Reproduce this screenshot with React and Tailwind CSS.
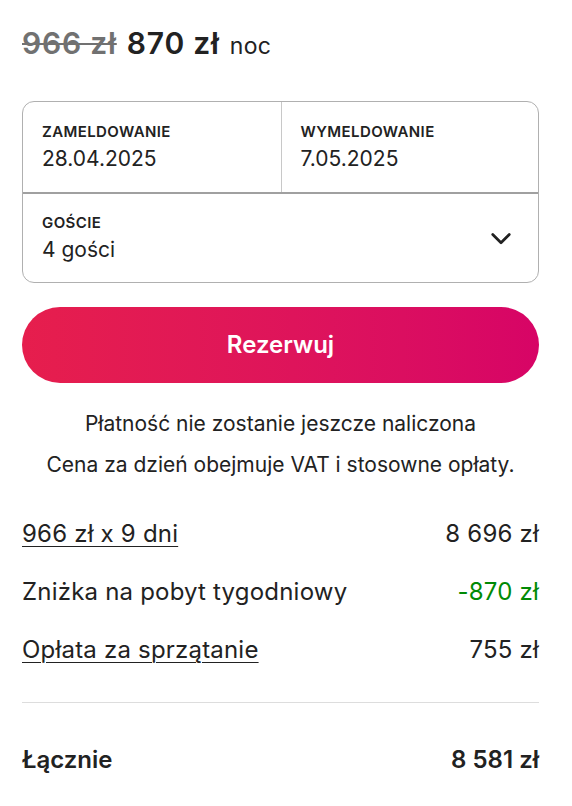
import React from 'react';

const rows = [
  { label: '966 zł x 9 dni', value: '8 696 zł', underline: true },
  { label: 'Zniżka na pobyt tygodniowy', value: '-870 zł', green: true },
  { label: 'Opłata za sprzątanie', value: '755 zł', underline: true },
];

const Field = ({ label, value, className = '' }) => (
  <div className={`flex flex-col px-[19px] ${className}`}>
    <span className="text-[15px] font-semibold uppercase leading-[18px] tracking-[0.4px] text-[#222]">{label}</span>
    <span className="mt-[5px] text-[21px] leading-[26px] text-[#222]">{value}</span>
  </div>
);

const App = () => {
  return (
    <div className="min-h-[806px] bg-white pt-[21px] text-[#222]" style={{ fontFamily: 'Inter, "Noto Sans", sans-serif' }}>
      <div className="ml-[22px] w-[517px]">
        {/* price per night */}
        <div className="flex items-baseline gap-[10px]">
          <span className="text-[30px] font-semibold tracking-[0.8px] text-[#717171] line-through decoration-[2px]">966 zł</span>
          <span className="text-[30px] font-semibold tracking-[0.8px]">870 zł</span>
          <span className="text-[23px] tracking-[0.3px]">noc</span>
        </div>

        {/* dates + guests */}
        <div className="mt-[35px] overflow-hidden rounded-[12px] border border-[#b0b0b0]">
          <div className="grid h-[92px] grid-cols-2 border-b-2 border-[#a0a0a0]">
            <Field label="Zameldowanie" value="28.04.2025" className="pt-[21px]" />
            <Field label="Wymeldowanie" value="7.05.2025" className="border-l border-[#c8c8c8] pt-[21px]" />
          </div>
          <div className="flex h-[88px] items-center justify-between pr-[26px]">
            <Field label="Goście" value="4 gości" />
            <svg width="22" height="22" viewBox="0 0 32 32" fill="none" stroke="#222" strokeWidth="4" strokeLinecap="round" strokeLinejoin="round">
              <path d="M4 11l12 12 12-12" />
            </svg>
          </div>
        </div>

        <button className="mt-[24px] flex h-[76px] w-full items-center justify-center rounded-full bg-gradient-to-r from-[#e61e4d] to-[#d70466] text-[24px] font-semibold text-white">
          Rezerwuj
        </button>

        <div className="mt-[27px] flex flex-col items-center gap-[13px] text-[21px] leading-[28px]">
          <p>Płatność nie zostanie jeszcze naliczona</p>
          <p>Cena za dzień obejmuje VAT i stosowne opłaty.</p>
        </div>

        <div className="mt-[39px] flex flex-col gap-[26px]">
          {rows.map((r) => (
            <div key={r.label} className="flex items-center justify-between text-[24px] leading-[32px] tracking-[0.2px]">
              <span className={r.underline ? 'underline decoration-[1px] underline-offset-[4px]' : ''}>{r.label}</span>
              <span className={r.green ? 'text-[#008a05]' : ''}>{r.value}</span>
            </div>
          ))}
        </div>

        <div className="mt-[36px] border-t border-[#dddddd]" />

        <div className="mt-[41px] flex items-center justify-between text-[24px] font-semibold leading-[32px]">
          <span>Łącznie</span>
          <span>8 581 zł</span>
        </div>
      </div>
    </div>
  );
};

export default App;
